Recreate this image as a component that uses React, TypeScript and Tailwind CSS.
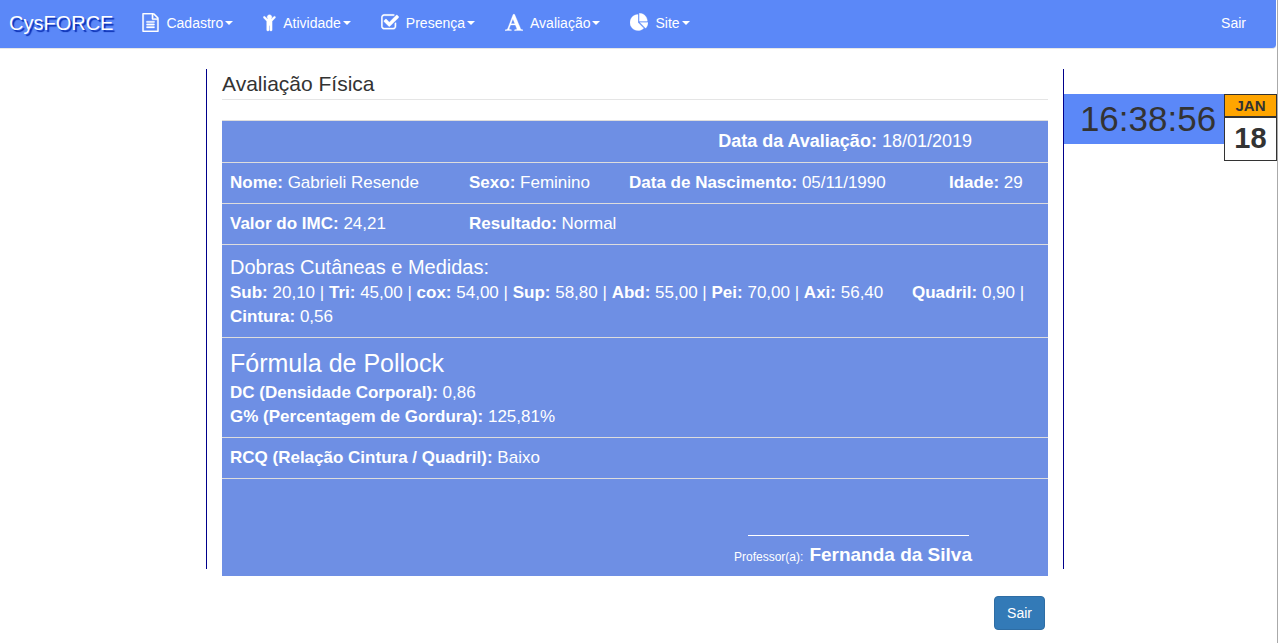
import type { ReactNode } from "react";

type Icon = { box: string; size: string; path: string };

const icons: Record<string, Icon> = {
  file: {
    box: "128 0 1536 1792",
    size: "w-[17px] mr-[7px]",
    path: "M1596 380q28 28 48 76t20 88v1152q0 40-28 68t-68 28h-1344q-40 0-68-28t-28-68v-1600q0-40 28-68t68-28h896q40 0 88 20t76 48zm-444-244v376h376q-10-29-22-41l-313-313q-12-12-41-22zm384 1528v-1024h-416q-40 0-68-28t-28-68v-416h-768v1536h1280zm-1024-864q0-14 9-23t23-9h704q14 0 23 9t9 23v64q0 14-9 23t-23 9h-704q-14 0-23-9t-9-23v-64zm736 224q14 0 23 9t9 23v64q0 14-9 23t-23 9h-704q-14 0-23-9t-9-23v-64q0-14 9-23t23-9h704zm0 256q14 0 23 9t9 23v64q0 14-9 23t-23 9h-704q-14 0-23-9t-9-23v-64q0-14 9-23t23-9h704z",
  },
  child: {
    box: "328 0 1136 1792",
    size: "w-[13px] mr-[7px]",
    path: "M1436 476l-292 292v824q0 46-33 79t-79 33-79-33-33-79v-384h-64v384q0 46-33 79t-79 33-79-33-33-79v-824l-292-292q-28-28-28-68t28-68q29-28 68.5-28t67.5 28l228 228h368l228-228q28-28 68-28t68 28q28 29 28 68.5t-28 67.5zm-316-92q0 93-65.5 158.5t-158.5 65.5-158.5-65.5-65.5-158.5 65.5-158.5 158.5-65.5 158.5 65.5 65.5 158.5z",
  },
  check: {
    box: "64 0 1664 1792",
    size: "w-[18px] mr-[7px]",
    path: "M1472 930v318q0 119-84.5 203.5t-203.5 84.5h-832q-119 0-203.5-84.5t-84.5-203.5v-832q0-119 84.5-203.5t203.5-84.5h832q63 0 117 25 15 7 18 23 3 17-9 29l-49 49q-10 10-23 10-3 0-9-2-23-6-45-6h-832q-66 0-113 47t-47 113v832q0 66 47 113t113 47h832q66 0 113-47t47-113v-254q0-13 9-22l64-64q10-10 23-10 6 0 12 3 20 8 20 29zm231-489l-814 814q-24 24-57 24t-57-24l-430-430q-24-24-24-57t24-57l110-110q24-24 57-24t57 24l263 263 647-647q24-24 57-24t57 24l110 110q24 24 24 57t-24 57z",
  },
  font: {
    box: "64 0 1664 1792",
    size: "w-[18px] mr-[7px]",
    path: "M789 559l-170 450q33 0 136.5 2t160.5 2q19 0 57-2-87-253-184-452zm-725 1105l2-79q23-7 56-12.5t57-10.5 49.5-14.5 44.5-29 31-50.5l237-616 280-724h128q8 14 11 21l205 480q33 78 106 257.5t114 274.5q15 34 58 144.5t72 168.5q20 45 35 57 19 15 88 29.5t84 20.5q6 38 6 57 0 4-.5 13t-.5 13q-63 0-190-8t-191-8q-76 0-215 7t-178 8q0-43 4-78l131-28q1 0 12.5-2.5t15.5-3.5 14.5-4.5 15-6.5 11-8 9-11 2.5-14q0-16-31-96.5t-72-177.5-42-100l-450-2q-26 58-76.5 195.5t-50.5 162.5q0 22 14 37.5t43.5 24.5 48.5 13.5 57 8.5 41 4q1 19 1 58 0 9-2 27-58 0-174.5-10t-174.5-10q-8 0-26.5 4t-21.5 4q-80 14-188 14z",
  },
  pie: {
    box: "0 0 1728 1792",
    size: "w-[18px] mr-[7px]",
    path: "M768 890l546 546q-106 108-247.5 168t-298.5 60q-209 0-385.5-103t-279.5-279.5-103-385.5 103-385.5 279.5-279.5 385.5-103v762zm187 6h773q0 157-60 298.5t-168 247.5zm709-128h-768v-768q209 0 385.5 103t279.5 279.5 103 385.5z",
  },
};

const menus = [
  { label: "Cadastro", icon: icons.file },
  { label: "Atividade", icon: icons.child },
  { label: "Presença", icon: icons.check },
  { label: "Avaliação", icon: icons.font },
  { label: "Site", icon: icons.pie },
];

function Menu({ label, icon }: { label: string; icon: Icon }) {
  return (
    <button type="button" aria-haspopup="menu" className="flex items-center px-[15px] text-sm">
      <svg viewBox={icon.box} className={`h-[19px] shrink-0 -mt-0.5 ${icon.size}`} fill="currentColor" stroke="currentColor" strokeWidth="30" aria-hidden="true">
        <path d={icon.path} />
      </svg>
      {label}
      <svg viewBox="0 0 8 4" className="ml-0.5 h-1 w-2" fill="currentColor" aria-hidden="true">
        <path d="M0 0h8L4 4z" />
      </svg>
    </button>
  );
}

function Field({ name, children }: { name: string; children: ReactNode }) {
  return (
    <>
      <b>{name}:</b> {children}
    </>
  );
}

const folds = [
  ["Sub", "20,10"],
  ["Tri", "45,00"],
  ["cox", "54,00"],
  ["Sup", "58,80"],
  ["Abd", "55,00"],
  ["Pei", "70,00"],
  ["Axi", "56,40"],
];

const row = "border-t border-[#ddd]";

export default function App() {
  return (
    <div className="min-h-screen border-r border-[#aaa] bg-white font-['Liberation_Sans',Arial,sans-serif] text-sm text-[#333]">
      <nav className="mr-px flex h-[49px] items-stretch rounded-br border-b border-[#e7e7e7] bg-[#5b88f8] pb-0.5 text-white">
        <a href="#inicio" className="mr-[14px] flex items-center pl-[9px] text-xl [text-shadow:2px_2px_1px_#0a2fb4]">
          CysFORCE
        </a>
        {menus.map((m) => (
          <Menu key={m.label} {...m} />
        ))}
        <a href="#sair" className="ml-auto flex items-center px-[30px]">
          Sair
        </a>
      </nav>

      <div className="grid grid-cols-[206fr_858fr_213fr] pt-5">
        <main className="col-start-2 h-[500px] border-x border-[#00008b] px-[15px]">
          <h1 className="mb-5 border-b border-[#e5e5e5] text-[21px] leading-[30px]">Avaliação Física</h1>
          <table className="w-full table-fixed border-collapse bg-[#6e8fe4] text-left align-top text-[17px] leading-6 text-white [&_td]:p-2 [&_td]:align-top">
            <colgroup>
              <col className="w-[239px]" />
              <col className="w-[160px]" />
              <col className="w-[320px]" />
              <col />
            </colgroup>
            <tbody>
              <tr className={`h-[42px] ${row}`}>
                <td colSpan={4}>
                  <div className="pr-[68px] text-right text-lg leading-6">
                    <Field name="Data da Avaliação">18/01/2019</Field>
                  </div>
                </td>
              </tr>
              <tr className={row}>
                <td><Field name="Nome">Gabrieli Resende</Field></td>
                <td><Field name="Sexo">Feminino</Field></td>
                <td><Field name="Data de Nascimento">05/11/1990</Field></td>
                <td><Field name="Idade">29</Field></td>
              </tr>
              <tr className={row}>
                <td><Field name="Valor do IMC">24,21</Field></td>
                <td colSpan={3}><Field name="Resultado">Normal</Field></td>
              </tr>
              <tr className={row}>
                <td colSpan={4}>
                  <h2 className="text-xl leading-7">Dobras Cutâneas e Medidas:</h2>
                  <p>
                    {folds.map(([name, value], i) => (
                      <span key={name}>
                        {i > 0 && " | "}
                        <Field name={name}>{value}</Field>
                      </span>
                    ))}{" "}
                    <span className="ml-6">
                      <Field name="Quadril">0,90</Field> |
                    </span>{" "}
                    <Field name="Cintura">0,56</Field>
                  </p>
                </td>
              </tr>
              <tr className={row}>
                <td colSpan={4}>
                  <h2 className="text-[25px] leading-[35px]">Fórmula de Pollock</h2>
                  <p><Field name="DC (Densidade Corporal)">0,86</Field></p>
                  <p><Field name="G% (Percentagem de Gordura)">125,81%</Field></p>
                </td>
              </tr>
              <tr className={row}>
                <td colSpan={4}><Field name="RCQ (Relação Cintura / Quadril)">Baixo</Field></td>
              </tr>
              <tr className={row}>
                <td colSpan={4}>
                  <div className="flex flex-col items-end pr-[68px] pt-12">
                    <div className="mr-[3px] w-[221px] border-t border-white" />
                    <p className="flex items-baseline gap-1.5 pt-2">
                      <span className="text-xs leading-[22px]">Professor(a):</span>
                      <b className="text-[19px] leading-[22px]">Fernanda da Silva</b>
                    </p>
                  </div>
                </td>
              </tr>
            </tbody>
          </table>
          <div className="flex justify-end pr-[3px] pt-5">
            <button type="button" className="rounded border border-[#2e6da4] bg-[#337ab7] px-3 py-1.5 text-sm text-white">
              Sair
            </button>
          </div>
        </main>

        <aside className="flex items-start pt-[25px]">
          <time className="h-[50px] grow bg-[#5b88f8] pl-2 text-center text-[35px] leading-[50px]">16:38:56</time>
          <time dateTime="2019-01-18" className="w-[53px] shrink-0 border border-[#333] text-center font-bold">
            <span className="block border-b-2 border-[#333] bg-[#ffa500] text-[15px] leading-[21px]">JAN</span>
            <span className="block bg-white pb-0.5 text-[29px] leading-10">18</span>
          </time>
        </aside>
      </div>
    </div>
  );
}
